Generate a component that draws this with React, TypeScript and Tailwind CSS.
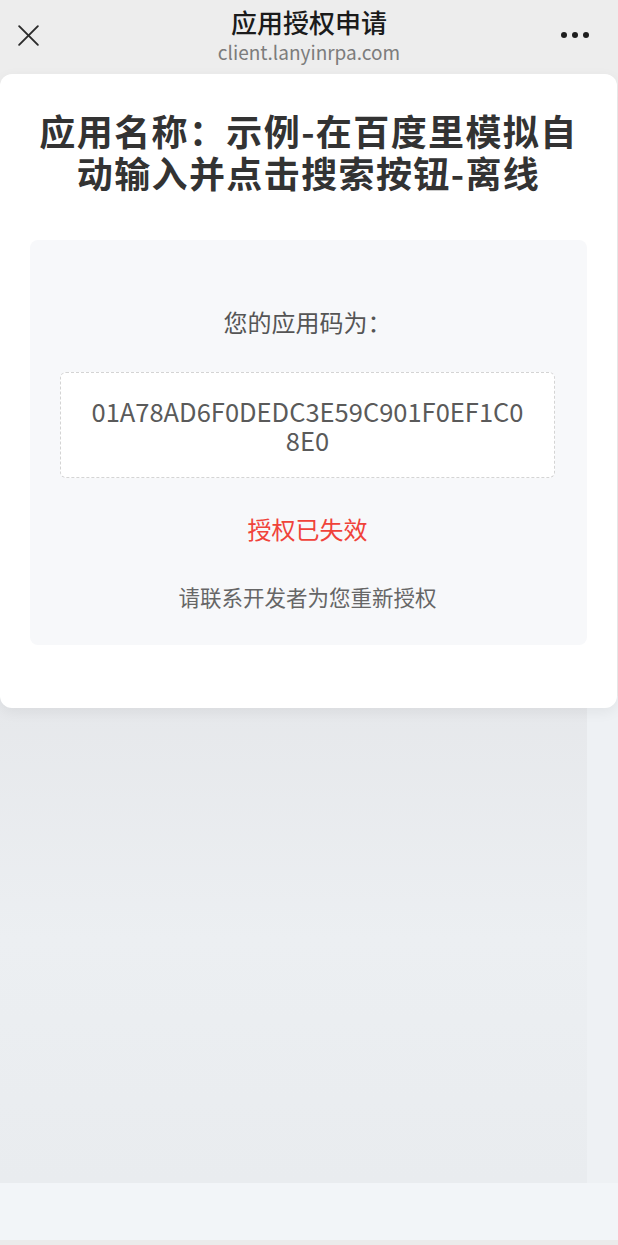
import React from "react";

export default function App() {
  const font = { fontFamily: '"Noto Sans CJK SC", "Noto Sans", sans-serif' };

  return (
    <div className="w-full h-[1245px] flex flex-col bg-[#ededed] overflow-hidden" style={font}>
      {/* TOP BAR */}
      <div className="relative h-[74px] shrink-0 flex flex-col items-center">
        <div className="mt-[6px] text-[26px] leading-[32px] font-medium text-[#1b1b1b]">应用授权申请</div>
        <div className="mt-[3px] text-[19px] leading-[22px] text-[#7c7c7c]">client.lanyinrpa.com</div>

        <svg viewBox="0 0 24 24" className="absolute left-[16px] top-[23px] w-[25px] h-[25px]" fill="none" stroke="#2b2b2b" strokeWidth="1.8" strokeLinecap="round">
          <line x1="3" y1="3" x2="21" y2="21" />
          <line x1="21" y1="3" x2="3" y2="21" />
        </svg>

        <div className="absolute right-[29px] top-[32px] flex gap-[5px]">
          <span className="w-[6px] h-[6px] rounded-full bg-[#1e1e1e]" />
          <span className="w-[6px] h-[6px] rounded-full bg-[#1e1e1e]" />
          <span className="w-[6px] h-[6px] rounded-full bg-[#1e1e1e]" />
        </div>
      </div>

      {/* CARD */}
      <div className="relative z-10 shrink-0 h-[634px] bg-white rounded-[12px] shadow-[0_4px_14px_rgba(0,0,0,0.06)] pt-[35px] px-[30px] mr-[1px]">
        <h1 className="text-center text-[36px] leading-[42px] font-bold tracking-[1.4px] text-[#333333]">
          应用名称：示例-在百度里模拟自动输入并点击搜索按钮-离线
        </h1>

        <div className="mt-[47px] h-[405px] rounded-[8px] bg-[#f7f8fa] flex flex-col items-center pt-[66px] pl-[30px] pr-[32px]">
          <div className="text-[24px] leading-[32px] text-[#555555]">您的应用码为：</div>

          <div className="mt-[34px] w-full h-[106px] bg-white border border-dashed border-[#d4d4d4] rounded-[6px] pt-[23px] px-[27px] text-center text-[25.5px] leading-[29px] text-[#5a5a5a] break-all">
            01A78AD6F0DEDC3E59C901F0EF1C08E0
          </div>

          <div className="mt-[35px] text-[24px] leading-[32px] text-[#f0433a]">授权已失效</div>

          <div className="mt-[37px] text-[21.5px] leading-[30px] text-[#666666]">请联系开发者为您重新授权</div>
        </div>
      </div>

      {/* EMPTY BACKDROP */}
      <div className="-mt-[12px] flex-1 flex flex-col">
        <div className="flex-1 flex bg-gradient-to-b from-[#e6e8eb] via-[#eceff2] to-[#e9ecef]">
          <div className="flex-1" />
          <div className="w-[31px] bg-[#eef1f4]" />
        </div>
        <div className="h-[57px] bg-[#f2f5f8]" />
        <div className="h-[5px] bg-[#ebebeb]" />
      </div>
    </div>
  );
}
